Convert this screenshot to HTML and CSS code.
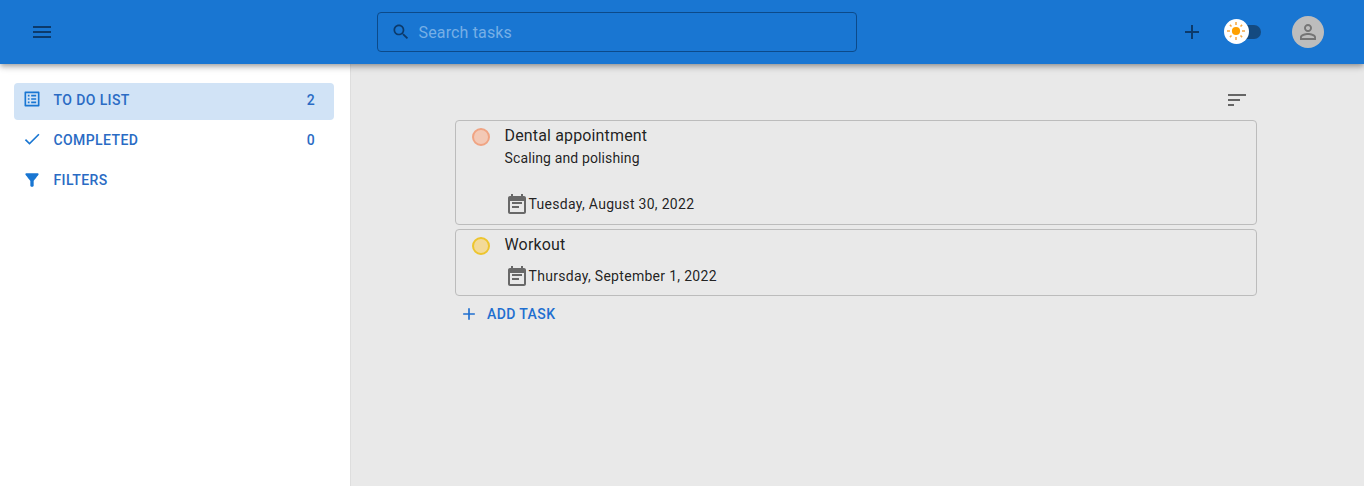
FILE: index.html
```html
<!DOCTYPE html>
<html lang="en">
<head>
<meta charset="utf-8">
<title>To do list</title>
<link rel="stylesheet" href="styles.css">
</head>
<body>
<header class="appbar">
  <button class="menu-btn" aria-label="Menu"><svg class="icon" viewBox="0 0 24 24"><path d="M3 18h18v-2H3v2zm0-5h18v-2H3v2zm0-7v2h18V6H3z"/></svg></button>
  <label class="search">
    <svg class="icon small" viewBox="0 0 24 24"><path d="M15.5 14h-.79l-.28-.27C15.41 12.59 16 11.11 16 9.5 16 5.91 13.09 3 9.5 3S3 5.91 3 9.5 5.91 16 9.5 16c1.61 0 3.09-.59 4.23-1.57l.27.28v.79l5 4.99L20.49 19l-4.99-5zm-6 0C7.01 14 5 11.99 5 9.5S7.01 5 9.5 5 14 7.01 14 9.5 11.99 14 9.5 14z"/></svg>
    <span class="placeholder">Search tasks</span>
  </label>
  <div class="actions">
    <button aria-label="Add"><svg class="icon" viewBox="0 0 24 24"><path d="M19 13h-6v6h-2v-6H5v-2h6V5h2v6h6v2z"/></svg></button>
    <div class="switch">
      <span class="thumb"><svg viewBox="0 0 18 18"><circle cx="9" cy="9" r="4.100"/><path d="M9 0v3M9 15v3M0 9h3M15 9h3M2.900 2.900l1.600 1.600M13.500 13.500l1.600 1.600M2.900 15.100l1.600-1.600M13.500 4.500l1.600-1.600"/></svg></span>
    </div>
    <div class="avatar"><svg class="icon" viewBox="0 0 24 24"><path d="M12 5.9c1.16 0 2.1.94 2.1 2.1s-.94 2.1-2.1 2.1S9.900 9.160 9.900 8s.94-2.100 2.100-2.100m0 9c2.970 0 6.100 1.460 6.100 2.100v1.100H5.900V17c0-.64 3.130-2.100 6.100-2.100M12 4C9.790 4 8 5.790 8 8s1.790 4 4 4 4-1.790 4-4-1.790-4-4-4zm0 9c-2.670 0-8 1.340-8 4v3h16v-3c0-2.660-5.330-4-8-4z"/></svg></div>
  </div>
</header>
<div class="layout">
  <nav class="sidebar">
    <a class="nav-item active"><svg class="icon small nav-list" viewBox="0 0 24 24"><path d="M19 5v14H5V5h14m1.100-2H3.900c-.5 0-.9.4-.9.9v16.200c0 .4.4.9.9.9h16.200c.4 0 .9-.5.9-.9V3.900c0-.5-.5-.9-.9-.9zM11 7h6v2h-6V7zm0 4h6v2h-6v-2zm0 4h6v2h-6zM7 7h2v2H7zm0 4h2v2H7zm0 4h2v2H7z"/></svg><span>To do list</span><span class="count">2</span></a>
    <a class="nav-item"><svg class="icon small nav-check" viewBox="0 0 24 24"><path d="M9 16.170 4.830 12l-1.420 1.410L9 19 21 7l-1.410-1.410z"/></svg><span>Completed</span><span class="count">0</span></a>
    <a class="nav-item"><svg class="icon small" viewBox="0 0 24 24"><path d="M4.250 5.610C6.270 8.200 10 13 10 13v6c0 .55.45 1 1 1h2c.55 0 1-.45 1-1v-6s3.720-4.800 5.740-7.390c.51-.66.04-1.610-.79-1.610H5.040c-.83 0-1.300.95-.79 1.610z"/></svg><span>Filters</span></a>
  </nav>
  <main class="main">
    <div class="tasks">
      <div class="toolbar"><svg class="icon" viewBox="0 0 24 24"><path d="M3 18h6v-2H3v2zM3 6v2h18V6H3zm0 7h12v-2H3v2z"/></svg></div>
      <article class="task tall">
        <span class="dot orange"></span>
        <div class="body">
          <h2>Dental appointment</h2>
          <p>Scaling and polishing</p>
          <div class="date"><svg class="icon" viewBox="0 0 24 24"><path d="M17 10H7v2h10v-2zm2-6h-1V2h-2v2H8V2H6v2H5c-1.110 0-1.990.9-1.990 2L3 20c0 1.100.89 2 2 2h14c1.100 0 2-.9 2-2V6c0-1.100-.9-2-2-2zm0 16H5V9h14v11zm-5-6H7v2h7v-2z"/></svg><span>Tuesday, August 30, 2022</span></div>
        </div>
      </article>
      <article class="task">
        <span class="dot yellow"></span>
        <div class="body">
          <h2>Workout</h2>
          <div class="date"><svg class="icon" viewBox="0 0 24 24"><path d="M17 10H7v2h10v-2zm2-6h-1V2h-2v2H8V2H6v2H5c-1.110 0-1.990.9-1.990 2L3 20c0 1.100.89 2 2 2h14c1.100 0 2-.9 2-2V6c0-1.100-.9-2-2-2zm0 16H5V9h14v11zm-5-6H7v2h7v-2z"/></svg><span>Thursday, September 1, 2022</span></div>
        </div>
      </article>
      <button class="add-task"><svg class="icon small" viewBox="0 0 24 24"><path d="M19 13h-6v6h-2v-6H5v-2h6V5h2v6h6v2z"/></svg><span>Add task</span></button>
    </div>
  </main>
</div>
</body>
</html>
```
FILE: styles.css
```css
* { box-sizing: border-box; }
body { margin: 0; height: 486px; overflow: hidden; display: flex; flex-direction: column; font-family: Roboto, sans-serif; color: rgba(0, 0, 0, 0.87); background: #fff; }
button { border: 0; padding: 0; margin: 0; background: none; color: inherit; font: inherit; display: flex; }
h2, p { margin: 0; font-weight: 400; }
.icon { display: block; flex: none; width: 24px; height: 24px; fill: currentColor; }
.icon.small { width: 20px; height: 20px; }

.appbar { position: relative; flex: none; height: 64px; padding: 0 40px 0 30px; display: grid; grid-template-columns: 347px 480px 1fr; align-items: center; background: #1976d2; color: rgba(0, 0, 0, 0.54); box-shadow: 0 2px 4px -1px rgba(0, 0, 0, 0.2), 0 4px 5px rgba(0, 0, 0, 0.14), 0 1px 10px rgba(0, 0, 0, 0.12); }
.appbar .icon { color: #0c3a6b; }
.search { height: 40px; padding-left: 13px; display: flex; align-items: center; gap: 7.5px; border: 1px solid #0c4a8a; border-radius: 4px; }
.placeholder { font-size: 16px; letter-spacing: 0.15px; color: #76afe6; }
.actions { display: flex; justify-content: flex-end; align-items: center; }
.switch { width: 34px; height: 14px; margin: 0 31px 0 23px; display: flex; align-items: center; border-radius: 7px; background: #144a80; }
.thumb { flex: none; width: 25px; height: 25px; margin: -2px 0 0 -3px; display: flex; align-items: center; padding-left: 3px; border-radius: 50%; background: #fff; }
.thumb svg { width: 18px; height: 18px; fill: #ffa000; stroke: #f5a742; stroke-width: 1.5; }
.thumb circle { stroke: none; }
.avatar { width: 32px; height: 32px; display: flex; align-items: center; justify-content: center; border-radius: 50%; background: #bdbdbd; }
.avatar .icon { color: #757575; }

.layout { flex: 1; display: flex; min-height: 0; }
.sidebar { width: 351px; padding: 19px 16px 0 14px; display: flex; flex-direction: column; gap: 3px; border-right: 1px solid #dedede; background: #fff; }
.nav-item { height: 37px; padding: 0 19px 3px 8px; display: flex; align-items: center; gap: 11.5px; border-radius: 4px; color: #2a6bc4; font-size: 14px; font-weight: 500; letter-spacing: 0.4px; line-height: 24px; text-transform: uppercase; }
.nav-item.active { background: #d1e3f6; }
.nav-item .icon { color: #1976d2; }
.nav-item .nav-list { margin-bottom: 2px; }
.nav-item .nav-check { margin-bottom: 2px; }
.nav-item .count { margin-left: auto; }

.main { flex: 1; display: flex; justify-content: center; padding-top: 24px; background: #e9e9e9; }
.tasks { width: 802px; margin-left: -3px; display: flex; flex-direction: column; }
.toolbar { height: 32px; padding-right: 8px; display: flex; justify-content: flex-end; color: #666; }
.task { height: 67px; margin-bottom: 4px; padding: 3px 16px 0; display: flex; gap: 14.5px; border: 1px solid #bcbcbc; border-radius: 4px; }
.task.tall { height: 105px; }
.dot { flex: none; width: 18px; height: 18px; margin: 4px 0 0 0; border: 2px solid; border-radius: 50%; }
.orange { border-color: #f0a483; background: #f3c9b6; }
.yellow { border-color: #edc52e; background: #f3da98; }
.task h2 { font-size: 16px; line-height: 24px; letter-spacing: 0.15px; }
.task p { height: 44px; font-size: 14px; line-height: 21px; letter-spacing: 0.13px; }
.date { display: flex; align-items: center; font-size: 14px; letter-spacing: 0.3px; }
.task:not(.tall) .date { margin-top: 7px; }
.date .icon { color: #686868; }
.add-task { align-self: flex-start; height: 27px; padding-left: 4px; gap: 8px; align-items: center; color: #1f6fd0; font-size: 14px; font-weight: 500; letter-spacing: 0.4px; text-transform: uppercase; }
```
